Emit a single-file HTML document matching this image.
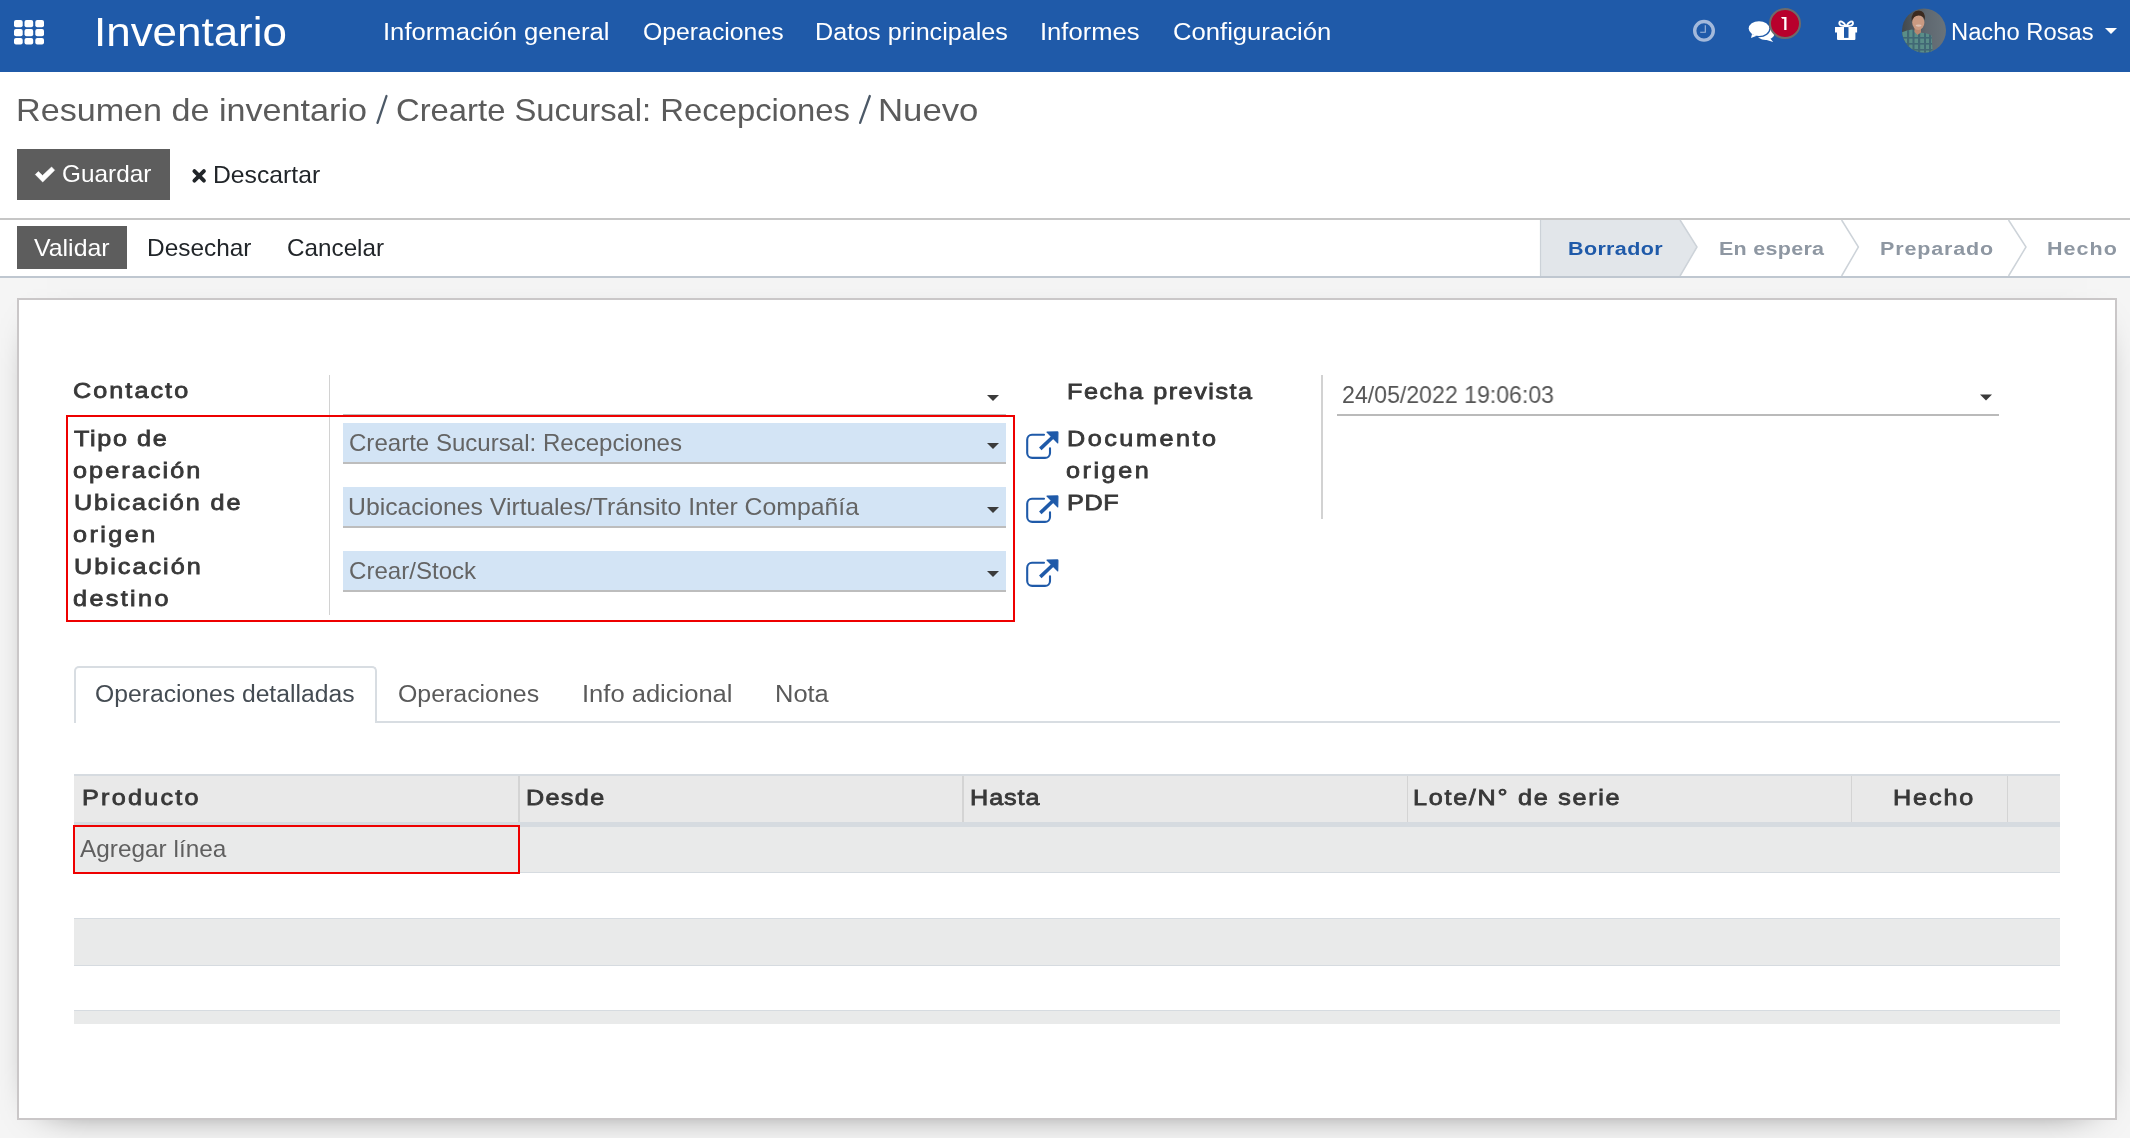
<!DOCTYPE html>
<html><head><meta charset="utf-8"><style>
html,body{margin:0;padding:0;}
body{width:2130px;height:1138px;overflow:hidden;position:relative;background:#fff;font-family:"Liberation Sans",sans-serif;}
.t{position:absolute;white-space:nowrap;line-height:1;will-change:transform;transform-origin:0 0;}
.a{position:absolute;}
.r{position:absolute;box-sizing:border-box;}
</style></head><body>
<!-- navbar -->
<div class="r" style="left:0;top:0;width:2130px;height:72px;background:#1f5aa9;"></div>
<svg class="a" style="left:0;top:0" width="60" height="60" fill="#fff"><rect x="14" y="20" width="8.7" height="7.2" rx="2"/><rect x="24.5" y="20" width="8.7" height="7.2" rx="2"/><rect x="35.3" y="20" width="8.7" height="7.2" rx="2"/><rect x="14" y="29" width="8.7" height="7.2" rx="2"/><rect x="24.5" y="29" width="8.7" height="7.2" rx="2"/><rect x="35.3" y="29" width="8.7" height="7.2" rx="2"/><rect x="14" y="38" width="8.7" height="6.5" rx="2"/><rect x="24.5" y="38" width="8.7" height="6.5" rx="2"/><rect x="35.3" y="38" width="8.7" height="6.5" rx="2"/></svg>
<!-- clock -->
<svg class="a" style="left:1680px;top:8px" width="50" height="46">
<circle cx="24" cy="22.8" r="9.3" fill="none" stroke="#a3b9db" stroke-width="3.4"/>
<path d="M25.3 17.3 V24.2 H20.2" fill="none" stroke="#a3b9db" stroke-width="1.1"/>
</svg>
<!-- chat -->
<svg class="a" style="left:1740px;top:10px" width="40" height="40">
<ellipse cx="25.5" cy="23.4" rx="9" ry="6.6" fill="#fff"/>
<path d="M29.5 27.5 L33.2 31.9 L25 29.6 Z" fill="#fff"/>
<ellipse cx="19" cy="18.6" rx="11.6" ry="8.75" fill="#1f5aa9"/>
<path d="M10.5 22.5 L11 27.9 L18 25.6 Z" fill="#1f5aa9" stroke="#1f5aa9" stroke-width="2.4"/>
<ellipse cx="19" cy="18.6" rx="10.3" ry="7.45" fill="#fff"/>
<path d="M12 24 L11 27.9 L16.8 25.8 Z" fill="#fff"/>
</svg>
<!-- badge -->
<div class="r" style="left:1769px;top:8px;width:32px;height:31px;border-radius:50%;background:#b8002c;border:2px solid #6d6b6b;"></div>
<svg class="a" style="left:1765px;top:5px" width="40" height="40"><path d="M16 12 L21.5 12 L21.5 25.1 L19.2 25.1 L19.2 13.8 L17.2 13.8 Z" fill="#fff"/></svg>
<!-- gift -->
<svg class="a" style="left:1830px;top:15px" width="32" height="30">
<path d="M16 11.2 C13.5 6.5 9.3 4.8 9.3 8.3 C9.3 10.6 12.5 11.2 16 11.2 Z M16.3 11.2 C18.8 6.5 23 4.8 23 8.3 C23 10.6 19.8 11.2 16.3 11.2 Z" fill="none" stroke="#fff" stroke-width="1.9"/>
<path d="M5 12 H27.1 V17.5 H25.4 V23.9 Q25.4 24.9 24.4 24.9 H8 Q7 24.9 7 23.9 V17.5 H5 Z" fill="#fff"/>
<rect x="14" y="12.1" width="4.5" height="10.8" fill="#1f5aa9"/>
</svg>
<!-- avatar -->
<svg class="a" style="left:1900px;top:7px" width="48" height="48">
<defs><clipPath id="cp"><circle cx="24" cy="23.6" r="22"/></clipPath>
<linearGradient id="bgg" x1="0" x2="1" y1="0" y2="0"><stop offset="0" stop-color="#3f4549"/><stop offset="0.55" stop-color="#5f6870"/><stop offset="1" stop-color="#6a747b"/></linearGradient>
<clipPath id="sh"><path d="M0 26 Q6 23.5 12 22.5 L20 25.5 Q28 26 31.5 28.5 L33 48 L0 48 Z"/></clipPath></defs>
<g clip-path="url(#cp)">
<rect width="48" height="48" fill="url(#bgg)"/>
<path d="M0 26 Q6 23.5 12 22.5 L20 25.5 Q28 26 31.5 28.5 L33 48 L0 48 Z" fill="#5a8e88"/>
<g clip-path="url(#sh)" fill="#2f4a66" opacity="0.55">
<rect x="7" y="20" width="2.2" height="30"/><rect x="12.5" y="20" width="2" height="30"/><rect x="18" y="20" width="2.2" height="30"/><rect x="24" y="20" width="2" height="30"/><rect x="29" y="20" width="2" height="30"/>
<rect x="0" y="30" width="40" height="1.6"/><rect x="0" y="36" width="40" height="1.6"/><rect x="0" y="42" width="40" height="1.6"/>
</g>
<path d="M14.5 20 H21 V25.5 L17.5 28 L14.5 25 Z" fill="#b8866e"/>
<ellipse cx="18.3" cy="15.5" rx="6.1" ry="7.4" fill="#c99a82"/>
<path d="M11.6 14.5 Q10.8 3.8 18.8 3.6 Q25.6 3.8 25 13.5 Q23.5 8.3 18.5 8.4 Q13.6 8.5 11.6 14.5 Z" fill="#3b2a1f"/>
<ellipse cx="18.6" cy="18.6" rx="3" ry="1.1" fill="#e6d2c8" opacity="0.7"/>
</g></svg>
<svg class="a" style="left:2100px;top:24px" width="24" height="14"><path d="M5 4 H17 L11 10 Z" fill="#fff"/></svg>

<!-- control panel -->
<svg class="a" style="left:370px;top:90px" width="510" height="40"><path d="M7.5 32.9 L16.5 6 M490.1 32.9 L499.8 6" stroke="#4c5967" stroke-width="2.3" stroke-linecap="round"/></svg>
<div class="r" style="left:17px;top:149px;width:153px;height:51px;background:#5d5d5d;"></div>
<svg class="a" style="left:30px;top:160px" width="30" height="30"><path d="M5.3 14.5 L8.4 11.6 L12.5 15.6 L21.6 7 L24.6 10.2 L12.7 22 Z" fill="#fff" stroke="#fff" stroke-width="0.6" stroke-linejoin="round"/></svg>
<svg class="a" style="left:186px;top:162px" width="26" height="26"><path d="M8.4 9.1 L17.9 18.6 M17.9 9.1 L8.4 18.6" fill="none" stroke="#212529" stroke-width="3.9" stroke-linecap="round"/></svg>
<div class="r" style="left:0;top:218px;width:2130px;height:2px;background:#c6c6c6;"></div>

<!-- statusbar -->
<div class="r" style="left:17px;top:226px;width:110px;height:43px;background:#5d5d5d;"></div>
<svg class="a" style="left:1530px;top:219px" width="600" height="58">
<polygon points="10.5,1 150,1 167,28 150,57 10.5,57" fill="#e2e6ea"/>
<line x1="10.5" y1="1" x2="10.5" y2="57" stroke="#ccd2d8" stroke-width="1.2"/>
<polyline points="150,1 167,28 150,57" fill="none" stroke="#cdd3d9" stroke-width="1.5"/>
<polyline points="311.6,1 328.4,28 311.6,57" fill="none" stroke="#cdd3d9" stroke-width="1.5"/>
<polyline points="478.5,1 496,28 478.5,57" fill="none" stroke="#cdd3d9" stroke-width="1.5"/>
</svg>
<div class="r" style="left:0;top:276px;width:2130px;height:2px;background:#bfc7d0;"></div>
<div class="r" style="left:0;top:278px;width:2130px;height:860px;background:#f5f5f5;"></div>

<!-- sheet -->
<div class="r" style="left:17px;top:298px;width:2100px;height:822px;background:#fff;border:2px solid #cac7c8;box-shadow:0 10px 40px -30px #000;"></div>

<!-- form left group -->
<div class="r" style="left:328.5px;top:375px;width:1.6px;height:240px;background:#d2d2d2;"></div>
<div class="r" style="left:343px;top:413.5px;width:663px;height:1.5px;background:#bdbdbd;"></div>
<svg class="a" style="left:980px;top:390px" width="30" height="16"><path d="M7 5 H19 L13 11 Z" fill="#3b3b3b"/></svg>
<div class="r" style="left:343px;top:423px;width:663px;height:41px;background:#d3e4f5;border-bottom:2px solid #bdbdbd;"></div>
<div class="r" style="left:343px;top:487px;width:663px;height:41px;background:#d3e4f5;border-bottom:2px solid #bdbdbd;"></div>
<div class="r" style="left:343px;top:551px;width:663px;height:41px;background:#d3e4f5;border-bottom:2px solid #bdbdbd;"></div>
<svg class="a" style="left:980px;top:438px" width="30" height="16"><path d="M7 5 H19 L13 11 Z" fill="#3b3b3b"/></svg>
<svg class="a" style="left:980px;top:502px" width="30" height="16"><path d="M7 5 H19 L13 11 Z" fill="#3b3b3b"/></svg>
<svg class="a" style="left:980px;top:566px" width="30" height="16"><path d="M7 5 H19 L13 11 Z" fill="#3b3b3b"/></svg>
<svg class="a" style="left:1015px;top:420px" width="50" height="40" viewBox="0 0 50 40">
<path d="M29 14.8 H17 A5 5 0 0 0 12.2 19.8 V33 A5 5 0 0 0 17.2 37.9 H30 A5 5 0 0 0 35 32.9 V28.2" fill="none" stroke="#1f5aa9" stroke-width="2.1" stroke-linecap="round"/>
<path d="M32 12.1 L42.4 11.9 Q42.9 11.9 42.9 12.5 L42.7 22.9 Z" fill="#1f5aa9" stroke="#1f5aa9" stroke-width="1.2" stroke-linejoin="round"/>
<path d="M25.3 28.9 L38.6 16.3" stroke="#1f5aa9" stroke-width="3.6"/>
</svg>
<svg class="a" style="left:1015px;top:484px" width="50" height="40" viewBox="0 0 50 40">
<path d="M29 14.8 H17 A5 5 0 0 0 12.2 19.8 V33 A5 5 0 0 0 17.2 37.9 H30 A5 5 0 0 0 35 32.9 V28.2" fill="none" stroke="#1f5aa9" stroke-width="2.1" stroke-linecap="round"/>
<path d="M32 12.1 L42.4 11.9 Q42.9 11.9 42.9 12.5 L42.7 22.9 Z" fill="#1f5aa9" stroke="#1f5aa9" stroke-width="1.2" stroke-linejoin="round"/>
<path d="M25.3 28.9 L38.6 16.3" stroke="#1f5aa9" stroke-width="3.6"/>
</svg>
<svg class="a" style="left:1015px;top:548px" width="50" height="40" viewBox="0 0 50 40">
<path d="M29 14.8 H17 A5 5 0 0 0 12.2 19.8 V33 A5 5 0 0 0 17.2 37.9 H30 A5 5 0 0 0 35 32.9 V28.2" fill="none" stroke="#1f5aa9" stroke-width="2.1" stroke-linecap="round"/>
<path d="M32 12.1 L42.4 11.9 Q42.9 11.9 42.9 12.5 L42.7 22.9 Z" fill="#1f5aa9" stroke="#1f5aa9" stroke-width="1.2" stroke-linejoin="round"/>
<path d="M25.3 28.9 L38.6 16.3" stroke="#1f5aa9" stroke-width="3.6"/>
</svg>
<div class="r" style="left:66px;top:415px;width:949px;height:207px;border:2px solid #ee0000;"></div>

<!-- right group -->
<div class="r" style="left:1321px;top:375px;width:1.6px;height:144px;background:#d2d2d2;"></div>
<div class="r" style="left:1337px;top:414px;width:662px;height:2px;background:#bababa;"></div>
<svg class="a" style="left:1973px;top:389px" width="30" height="16"><path d="M7 5.5 H19 L13 11.5 Z" fill="#3b3b3b"/></svg>

<!-- tabs -->
<div class="r" style="left:376px;top:721px;width:1684px;height:2px;background:#d8dde2;"></div>
<div class="r" style="left:74px;top:666px;width:303px;height:57px;border:2px solid #d8dde2;border-bottom:none;border-radius:5px 5px 0 0;background:#fff;"></div>

<!-- table -->
<div class="r" style="left:74px;top:774px;width:1986px;height:53px;background:#e9e9e9;border-top:2px solid #d6dbe0;border-bottom:5px solid #d6dbe0;"></div>
<div class="r" style="left:518px;top:776px;width:1.6px;height:46px;background:#d4d4d4;"></div>
<div class="r" style="left:962px;top:776px;width:1.6px;height:46px;background:#d4d4d4;"></div>
<div class="r" style="left:1406.5px;top:776px;width:1.6px;height:46px;background:#d4d4d4;"></div>
<div class="r" style="left:1850.5px;top:776px;width:1.6px;height:46px;background:#d4d4d4;"></div>
<div class="r" style="left:2006.5px;top:776px;width:1.6px;height:46px;background:#d4d4d4;"></div>
<div class="r" style="left:74px;top:827px;width:1986px;height:46px;background:#e9eaea;border-bottom:1.5px solid #d6dbe0;"></div>
<div class="r" style="left:74px;top:918px;width:1986px;height:48px;background:#e9eaea;border-top:1.5px solid #d6dbe0;border-bottom:1.5px solid #d6dbe0;"></div>
<div class="r" style="left:74px;top:1010px;width:1986px;height:14px;background:#e9eaea;border-top:1.5px solid #d6dbe0;"></div>
<div class="r" style="left:73px;top:825px;width:447px;height:49px;border:2px solid #ee0000;"></div>

<div class="t" style="left:94.41px;top:12.30px;font-size:40px;color:#ffffff;transform:scaleX(1.0982);">Inventario</div>
<div class="t" style="left:382.92px;top:21.20px;font-size:23.5px;color:#ffffff;transform:scaleX(1.0907);letter-spacing:0.000px;">Información general</div>
<div class="t" style="left:642.85px;top:21.20px;font-size:23.5px;color:#ffffff;transform:scaleX(1.0550);">Operaciones</div>
<div class="t" style="left:815.06px;top:21.20px;font-size:23.5px;color:#ffffff;transform:scaleX(1.0701);">Datos principales</div>
<div class="t" style="left:1039.92px;top:21.20px;font-size:23.5px;color:#ffffff;transform:scaleX(1.0888);">Informes</div>
<div class="t" style="left:1172.91px;top:21.20px;font-size:23.5px;color:#ffffff;transform:scaleX(1.0909);">Configuración</div>
<div class="t" style="left:1951.28px;top:21.20px;font-size:23.5px;color:#ffffff;transform:scaleX(1.0109);">Nacho Rosas</div>
<div class="t" style="left:16.00px;top:94.20px;font-size:32px;color:#5b5b5b;transform:scaleX(1.0665);">Resumen de inventario</div>
<div class="t" style="left:395.95px;top:94.20px;font-size:32px;color:#5b5b5b;transform:scaleX(1.0250);letter-spacing:0.000px;">Crearte Sucursal: Recepciones</div>
<div class="t" style="left:878.44px;top:94.20px;font-size:32px;color:#5b5b5b;transform:scaleX(1.0852);">Nuevo</div>
<div class="t" style="left:61.55px;top:162.80px;font-size:23.2px;color:#ffffff;transform:scaleX(1.0500);">Guardar</div>
<div class="t" style="left:213.37px;top:163.60px;font-size:23.2px;color:#212529;transform:scaleX(1.0663);">Descartar</div>
<div class="t" style="left:33.80px;top:236.70px;font-size:23.2px;color:#ffffff;transform:scaleX(1.0729);">Validar</div>
<div class="t" style="left:146.79px;top:236.70px;font-size:23.2px;color:#212529;transform:scaleX(1.0526);letter-spacing:-0.000px;">Desechar</div>
<div class="t" style="left:287.25px;top:236.70px;font-size:23.2px;color:#212529;transform:scaleX(1.0462);">Cancelar</div>
<div class="t" style="left:1567.58px;top:238.80px;font-size:19.2px;color:#1f5aa9;transform:scaleX(1.1200);font-weight:700;letter-spacing:0.329px;">Borrador</div>
<div class="t" style="left:1718.68px;top:238.80px;font-size:19.2px;color:#8e97a2;transform:scaleX(1.1200);font-weight:700;letter-spacing:0.254px;">En espera</div>
<div class="t" style="left:1879.88px;top:238.80px;font-size:19.2px;color:#8e97a2;transform:scaleX(1.1200);font-weight:700;letter-spacing:0.763px;">Preparado</div>
<div class="t" style="left:2046.88px;top:238.80px;font-size:19.2px;color:#8e97a2;transform:scaleX(1.1200);font-weight:700;letter-spacing:0.929px;">Hecho</div>
<div class="t" style="left:73.08px;top:380.20px;font-size:22.5px;color:#383838;transform:scaleX(1.1200);-webkit-text-stroke:0.8px #383838;letter-spacing:1.827px;">Contacto</div>
<div class="t" style="left:74.10px;top:428.20px;font-size:22.5px;color:#383838;transform:scaleX(1.1200);-webkit-text-stroke:0.8px #383838;letter-spacing:1.432px;">Tipo de</div>
<div class="t" style="left:72.98px;top:459.90px;font-size:22.5px;color:#383838;transform:scaleX(1.1200);-webkit-text-stroke:0.8px #383838;letter-spacing:1.859px;">operación</div>
<div class="t" style="left:73.58px;top:491.90px;font-size:22.5px;color:#383838;transform:scaleX(1.1200);-webkit-text-stroke:0.8px #383838;letter-spacing:1.682px;">Ubicación de</div>
<div class="t" style="left:72.98px;top:523.50px;font-size:22.5px;color:#383838;transform:scaleX(1.1200);-webkit-text-stroke:0.8px #383838;letter-spacing:2.175px;">origen</div>
<div class="t" style="left:73.58px;top:555.70px;font-size:22.5px;color:#383838;transform:scaleX(1.1200);-webkit-text-stroke:0.8px #383838;letter-spacing:1.792px;">Ubicación</div>
<div class="t" style="left:72.98px;top:587.60px;font-size:22.5px;color:#383838;transform:scaleX(1.1200);-webkit-text-stroke:0.8px #383838;letter-spacing:2.110px;">destino</div>
<div class="t" style="left:348.96px;top:432.10px;font-size:23.2px;color:#646464;transform:scaleX(1.0376);">Crearte Sucursal: Recepciones</div>
<div class="t" style="left:348.36px;top:495.90px;font-size:23.2px;color:#646464;transform:scaleX(1.0685);letter-spacing:0.000px;">Ubicaciones Virtuales/Tránsito Inter Compañía</div>
<div class="t" style="left:348.96px;top:560.00px;font-size:23.2px;color:#646464;transform:scaleX(1.0388);">Crear/Stock</div>
<div class="t" style="left:1067.08px;top:380.50px;font-size:22.5px;color:#383838;transform:scaleX(1.1200);-webkit-text-stroke:0.8px #383838;letter-spacing:1.357px;">Fecha prevista</div>
<div class="t" style="left:1067.08px;top:428.00px;font-size:22.5px;color:#383838;transform:scaleX(1.1200);-webkit-text-stroke:0.8px #383838;letter-spacing:2.246px;">Documento</div>
<div class="t" style="left:1066.18px;top:459.90px;font-size:22.5px;color:#383838;transform:scaleX(1.1200);-webkit-text-stroke:0.8px #383838;letter-spacing:2.264px;">origen</div>
<div class="t" style="left:1067.08px;top:491.60px;font-size:22.5px;color:#383838;transform:scaleX(1.1200);-webkit-text-stroke:0.8px #383838;letter-spacing:0.589px;">PDF</div>
<div class="t" style="left:1342.40px;top:384.10px;font-size:23.2px;color:#555555;transform:scaleX(0.9967);">24/05/2022 19:06:03</div>
<div class="t" style="left:95.15px;top:683.20px;font-size:23.5px;color:#454c53;transform:scaleX(1.0510);">Operaciones detalladas</div>
<div class="t" style="left:398.44px;top:683.20px;font-size:23.5px;color:#5a5a5a;transform:scaleX(1.0588);">Operaciones</div>
<div class="t" style="left:581.83px;top:683.20px;font-size:23.5px;color:#5a5a5a;transform:scaleX(1.0867);letter-spacing:-0.000px;">Info adicional</div>
<div class="t" style="left:774.83px;top:683.20px;font-size:23.5px;color:#5a5a5a;transform:scaleX(1.0833);">Nota</div>
<div class="t" style="left:81.88px;top:787.30px;font-size:22.5px;color:#383838;transform:scaleX(1.1200);-webkit-text-stroke:0.8px #383838;letter-spacing:2.005px;">Producto</div>
<div class="t" style="left:526.18px;top:787.30px;font-size:22.5px;color:#383838;transform:scaleX(1.1200);-webkit-text-stroke:0.8px #383838;letter-spacing:1.187px;">Desde</div>
<div class="t" style="left:970.48px;top:787.30px;font-size:22.5px;color:#383838;transform:scaleX(1.1200);-webkit-text-stroke:0.8px #383838;letter-spacing:0.835px;">Hasta</div>
<div class="t" style="left:1412.88px;top:787.30px;font-size:22.5px;color:#383838;transform:scaleX(1.1200);-webkit-text-stroke:0.8px #383838;letter-spacing:1.524px;">Lote/N° de serie</div>
<div class="t" style="left:1893.18px;top:787.30px;font-size:22.5px;color:#383838;transform:scaleX(1.1200);-webkit-text-stroke:0.8px #383838;letter-spacing:1.656px;">Hecho</div>
<div class="t" style="left:80.20px;top:838.00px;font-size:23.2px;color:#5f5f5f;transform:scaleX(1.0511);">Agregar línea</div>
</body></html>
